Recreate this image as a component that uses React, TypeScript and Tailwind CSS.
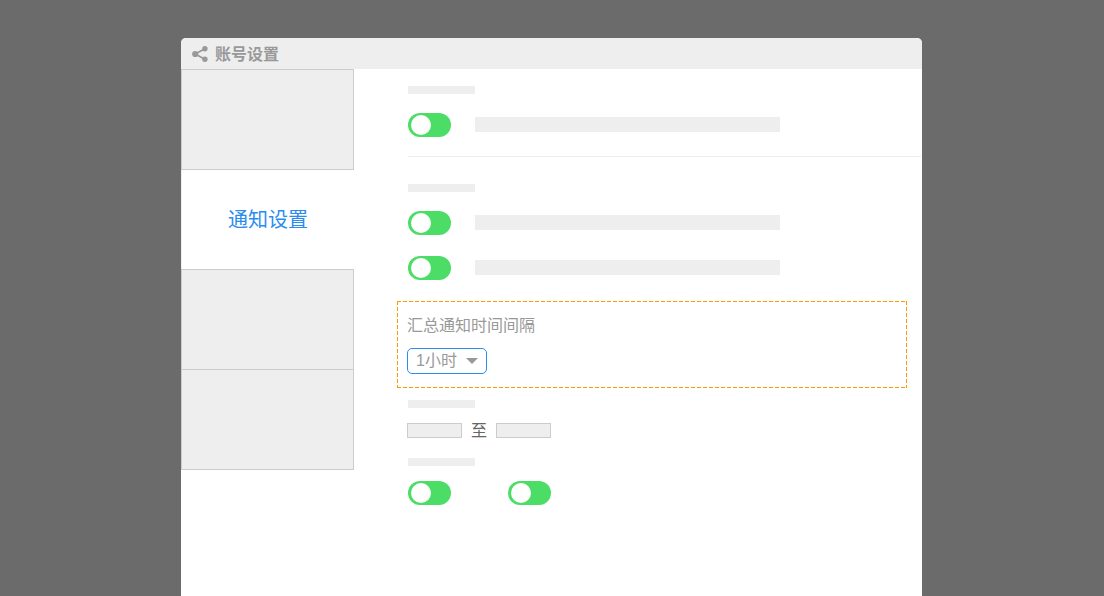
const FONT = "font-['Liberation_Sans','Noto_Sans_CJK_SC',sans-serif]";

function Toggle() {
  return (
    <div className="flex h-6 w-[43px] items-center rounded-full bg-[#4cdd66] pl-[3px]">
      <div className="h-5 w-5 rounded-full bg-white" />
    </div>
  );
}

function Label() {
  return <div className="h-2 w-[67px] bg-[#eeeeee]" />;
}

function ToggleRow() {
  return (
    <div className="flex items-start gap-6">
      <Toggle />
      <div className="mt-1 h-[15px] w-[305px] bg-[#eeeeee]" />
    </div>
  );
}

function ShareIcon() {
  return (
    <svg width="16" height="16" viewBox="0 0 16 16" fill="#999999" stroke="none">
      <circle cx="3.2" cy="8" r="3.1" />
      <circle cx="12.9" cy="2.8" r="2.7" />
      <circle cx="12.9" cy="13.2" r="2.7" />
      <path d="M3.2 8 12.9 2.8M3.2 8l9.7 5.2" stroke="#999999" strokeWidth="1.8" fill="none" />
    </svg>
  );
}

export default function App() {
  return (
    <div className={`h-[596px] overflow-hidden bg-[#6b6b6b] pt-[38px] ${FONT}`}>
      <div className="ml-[181px] h-[558px] w-[741px] rounded-t-[5px] bg-white">
        {/* Header */}
        <div className="flex h-[31px] items-center gap-[7px] rounded-t-[5px] bg-[#eeeeee] pl-[11px]">
          <ShareIcon />
          <span className="mt-[2px] text-base font-bold text-[#999999]">账号设置</span>
        </div>

        <div className="flex">
          {/* Sidebar */}
          <div className="w-[173px] shrink-0">
            <div className="h-[101px] border border-[#cccccc] bg-[#eeeeee]" />
            <div className="flex h-[99px] items-center justify-center border-l border-[#eeeeee] text-xl text-[#2b8cf0]">
              通知设置
            </div>
            <div className="h-[101px] border border-[#cccccc] bg-[#eeeeee]" />
            <div className="-mt-px h-[101px] border border-[#cccccc] bg-[#eeeeee]" />
          </div>

          {/* Content */}
          <div className="flex-1 pt-[17px]">
            <div className="ml-[54px]">
              <Label />
              <div className="mt-[19px]">
                <ToggleRow />
              </div>
              <div className="mt-[19px] mr-px h-px bg-[#eeeeee]" />
              <div className="mt-[27px]">
                <Label />
              </div>
              <div className="mt-[19px] flex flex-col gap-[21px]">
                <ToggleRow />
                <ToggleRow />
              </div>
            </div>

            {/* Highlighted field, dashes are 4 on 2 off like the picture */}
            <div className="mt-[21px] ml-[43px] h-[87px] w-[510px] pt-[14px] pl-[10px] [background:repeating-linear-gradient(90deg,#ff9900_0_4px,transparent_4px_6px)_top/100%_1px_no-repeat,repeating-linear-gradient(90deg,#ff9900_0_4px,transparent_4px_6px)_bottom/100%_1px_no-repeat,repeating-linear-gradient(180deg,#ff9900_0_4px,transparent_4px_6px)_left/1px_100%_no-repeat,repeating-linear-gradient(180deg,#ff9900_0_4px,transparent_4px_6px)_right/1px_100%_no-repeat]">
              <div className="text-base leading-[22px] text-[#999999]">汇总通知时间间隔</div>
              <div className="mt-[11px] flex h-[26px] w-20 items-center rounded-[5px] border border-[#2b8cf0] pl-2 text-base text-[#999999]">
                <span>1小时</span>
                <span className="ml-[9px] h-0 w-0 border-x-[6px] border-t-[6px] border-x-transparent border-t-[#999999]" />
              </div>
            </div>

            <div className="mt-3 ml-[54px]">
              <Label />
            </div>
            <div className="mt-[15px] ml-[53px] flex items-center">
              <div className="h-[15px] w-[55px] border border-[#cccccc] bg-[#eeeeee]" />
              <span className="w-[34px] text-center text-base leading-[15px] text-[#666666]">至</span>
              <div className="h-[15px] w-[55px] border border-[#cccccc] bg-[#eeeeee]" />
            </div>
            <div className="mt-5 ml-[54px]">
              <Label />
              <div className="mt-[15px] flex gap-[57px]">
                <Toggle />
                <Toggle />
              </div>
            </div>
          </div>
        </div>
      </div>
    </div>
  );
}
